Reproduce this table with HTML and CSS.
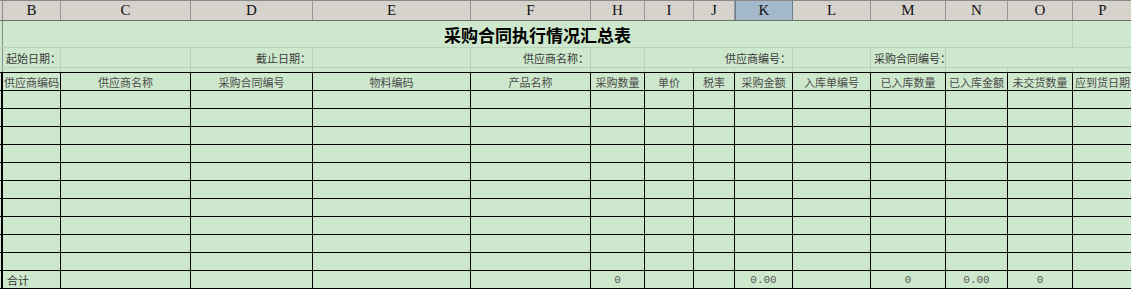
FILE: index.html
```html
<!DOCTYPE html>
<html lang="zh_cn">

<head>
  <meta charset="UTF-8">
  <meta name="viewport" content="width=device-width, initial-scale=1.0">
  <title>采购合同执行情况汇总表</title>
  <link rel="stylesheet" href="styles.css">
</head>

<body>
  <div class="sheet">
    <!-- column letters -->
    <div class="row cols">
      <span class="stub"></span>
      <span>B</span><span>C</span><span>D</span><span>E</span><span>F</span><span>H</span><span>I</span>
      <span>J</span><span class="sel">K</span><span>L</span><span>M</span><span>N</span><span>O</span><span>P</span>
    </div>

    <div class="row title">
      <span class="stub"></span>
      <span class="span13">采购合同执行情况汇总表</span>
      <span></span>
    </div>

    <div class="row filter">
      <span class="stub"></span>
      <span class="left">起始日期：</span>
      <span></span>
      <span class="right">截止日期：</span>
      <span></span>
      <span class="right">供应商名称：</span>
      <span></span>
      <span class="right span3">供应商编号：</span>
      <span></span>
      <span class="left">采购合同编号：</span>
      <span class="span3"></span>
    </div>

    <div class="row gap">
      <span class="stub"></span>
      <span></span><span></span><span></span><span></span><span></span><span></span><span></span>
      <span></span><span></span><span></span><span></span><span></span><span></span><span></span>
    </div>

    <div class="row grid head">
      <span class="stub"></span>
      <span>供应商编码</span>
      <span>供应商名称</span>
      <span>采购合同编号</span>
      <span>物料编码</span>
      <span>产品名称</span>
      <span>采购数量</span>
      <span>单价</span>
      <span>税率</span>
      <span>采购金额</span>
      <span>入库单编号</span>
      <span>已入库数量</span>
      <span>已入库金额</span>
      <span>未交货数量</span>
      <span>应到货日期</span>
    </div>

    <div class="row grid"><span class="stub"></span><span></span><span></span><span></span><span></span><span></span><span></span><span></span><span></span><span></span><span></span><span></span><span></span><span></span><span></span></div>
    <div class="row grid"><span class="stub"></span><span></span><span></span><span></span><span></span><span></span><span></span><span></span><span></span><span></span><span></span><span></span><span></span><span></span><span></span></div>
    <div class="row grid"><span class="stub"></span><span></span><span></span><span></span><span></span><span></span><span></span><span></span><span></span><span></span><span></span><span></span><span></span><span></span><span></span></div>
    <div class="row grid"><span class="stub"></span><span></span><span></span><span></span><span></span><span></span><span></span><span></span><span></span><span></span><span></span><span></span><span></span><span></span><span></span></div>
    <div class="row grid"><span class="stub"></span><span></span><span></span><span></span><span></span><span></span><span></span><span></span><span></span><span></span><span></span><span></span><span></span><span></span><span></span></div>
    <div class="row grid"><span class="stub"></span><span></span><span></span><span></span><span></span><span></span><span></span><span></span><span></span><span></span><span></span><span></span><span></span><span></span><span></span></div>
    <div class="row grid"><span class="stub"></span><span></span><span></span><span></span><span></span><span></span><span></span><span></span><span></span><span></span><span></span><span></span><span></span><span></span><span></span></div>
    <div class="row grid"><span class="stub"></span><span></span><span></span><span></span><span></span><span></span><span></span><span></span><span></span><span></span><span></span><span></span><span></span><span></span><span></span></div>
    <div class="row grid"><span class="stub"></span><span></span><span></span><span></span><span></span><span></span><span></span><span></span><span></span><span></span><span></span><span></span><span></span><span></span><span></span></div>
    <div class="row grid"><span class="stub"></span><span></span><span></span><span></span><span></span><span></span><span></span><span></span><span></span><span></span><span></span><span></span><span></span><span></span><span></span></div>

    <div class="row grid total">
      <span class="stub"></span>
      <span class="left">合计</span>
      <span></span>
      <span></span>
      <span></span>
      <span></span>
      <span class="num">0</span>
      <span></span>
      <span></span>
      <span class="num">0.00</span>
      <span></span>
      <span class="num">0</span>
      <span class="num">0.00</span>
      <span class="num">0</span>
      <span></span>
    </div>
  </div>
</body>

</html>
```

FILE: styles.css
```css
* {
  padding: 0;
  margin: 0;
  box-sizing: border-box;
}

html,
body {
  width: 1131px;
  height: 289px;
  overflow: hidden;
  background: #cde8cc;
}

.sheet {
  --cols: 3px 58px 130px 122px 158px 120px 54px 49px 41px 58px 78px 75px 62px 65px 60px;
  width: 1131px;
  overflow: hidden;
  font-family: "Noto Sans CJK SC", "Noto Sans", sans-serif;
  font-size: 11px;
  color: #4a4a4a;
}

.row {
  display: grid;
  grid-template-columns: var(--cols);
  width: 1133px;
  border-bottom: 1px solid #bcd1bc;
}

.row span {
  display: flex;
  align-items: center;
  justify-content: center;
  white-space: nowrap;
  border-right: 1px solid #bcd1bc;
}

.row .stub {
  border-right: 1px solid #8c8c8c;
}

/* column letters */
.cols {
  height: 21px;
  background: #d6d3cc;
  border-top: 1px solid #8a8a8a;
  border-bottom: 1px solid #707070;
  font-family: "Liberation Serif", serif;
  font-size: 15px;
  color: #111;
}

.cols span {
  border-right: 1px solid #959595;
}

.cols .sel {
  background: #a5b9cc;
  border-right: 1px solid #6b7f94;
  border-left: 1px solid #6b7f94;
}

.title {
  height: 27px;
}

.title .span13 {
  grid-column: span 13;
  font-size: 17px;
  font-weight: bold;
  color: #000;
  padding-top: 1px;
}

.filter {
  height: 20px;
  color: #3a3a3a;
}

.gap {
  height: 5px;
  border-bottom: 1px solid #000;
}

.span3 {
  grid-column: span 3;
}

.row .left {
  justify-content: flex-start;
  padding-left: 3px;
  overflow: visible;
}

.row .right {
  justify-content: flex-end;
  padding-right: 1px;
}

/* bordered table body */
.grid {
  height: 18px;
  border-bottom: 1px solid #000;
}

.grid span {
  border-right: 1px solid #000;
  overflow: hidden;
}

.grid .stub {
  border-right: 2px solid #000;
}

.head span {
  padding-top: 1px;
}

.total .left {
  padding-left: 4px;
  color: #333;
}

.num {
  font-family: "Liberation Mono", monospace;
  font-size: 11px;
  color: #555;
}
```
